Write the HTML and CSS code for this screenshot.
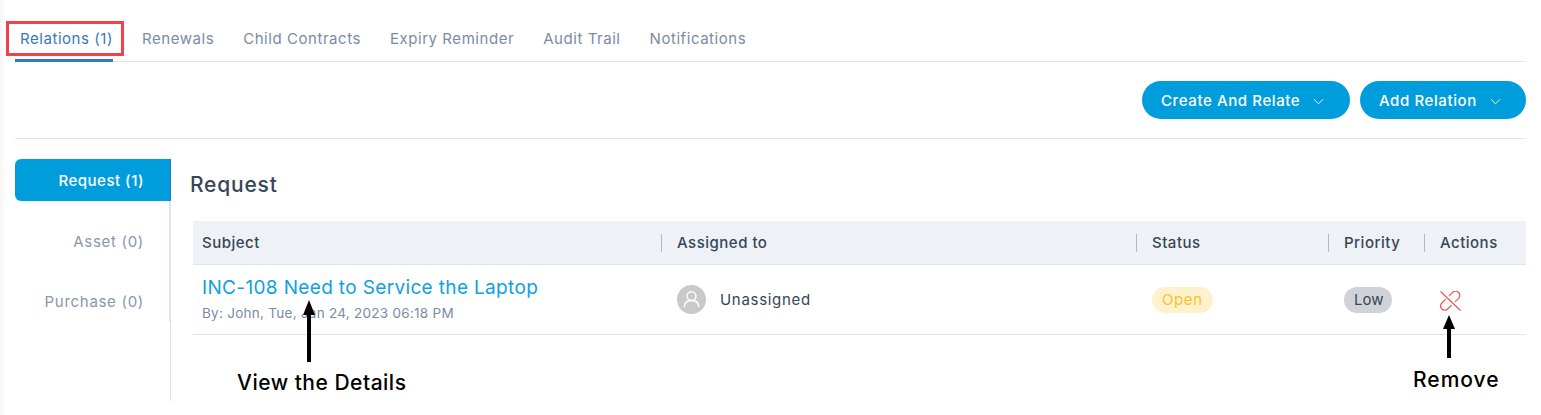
FILE: index.html
```html
<!DOCTYPE html>
<html lang="en">
<head>
<meta charset="UTF-8">
<meta name="viewport" content="width=device-width, initial-scale=1.0">
<title>Relations</title>
<link rel="stylesheet" href="styles.css">
</head>
<body>
    <div class="tabs">
        <a class="tab tab-active">Relations (1)</a>
        <a class="tab">Renewals</a>
        <a class="tab">Child Contracts</a>
        <a class="tab">Expiry Reminder</a>
        <a class="tab">Audit Trail</a>
        <a class="tab">Notifications</a>
    </div>

    <div class="toolbar">
        <button class="button button-create">Create And Relate
            <svg class="chevron" viewBox="0 0 12 7"><path d="M1 1l5 5 5-5"/></svg>
        </button>
        <button class="button button-add">Add Relation
            <svg class="chevron" viewBox="0 0 12 7"><path d="M1 1l5 5 5-5"/></svg>
        </button>
    </div>

    <div class="content">
        <div class="sidebar">
            <div class="side-item side-active">Request (1)</div>
            <div class="side-item">Asset (0)</div>
            <div class="side-item">Purchase (0)</div>
        </div>
        <div class="main">
            <h2 class="heading">Request</h2>
            <div class="table">
                <div class="row row-head">
                    <div class="cell cell-subject">Subject</div>
                    <div class="cell"><span class="sep">Assigned to</span></div>
                    <div class="cell"><span class="sep">Status</span></div>
                    <div class="cell"><span class="sep">Priority</span></div>
                    <div class="cell"><span class="sep">Actions</span></div>
                </div>
                <div class="row row-body">
                    <div class="cell cell-subject">
                        <a class="subject-link">INC-108 Need to Service the Laptop</a>
                        <div class="subject-meta">By: John, Tue, Jan 24, 2023 06:18 PM</div>
                    </div>
                    <div class="cell cell-user">
                        <span class="avatar">
                            <svg viewBox="0 0 30 30"><circle cx="15" cy="11.5" r="4.6"/><path d="M7.5 23c0-4.6 3-7 7.500-7s7.500 2.400 7.500 7"/></svg>
                        </span>
                        Unassigned
                    </div>
                    <div class="cell cell-pad"><span class="pill pill-open">Open</span></div>
                    <div class="cell cell-pad"><span class="pill pill-low">Low</span></div>
                    <div class="cell cell-pad">
                        <svg class="unlink" viewBox="0 0 21 20">
                            <path d="M.5.500l20 19"/>
                            <path d="M5.800 8.100L1.850 12a4.200 4.200 0 0 0 5.900 6l3.850-3.800"/>
                            <path d="M8.900 5.100l3.750-3.700a4.200 4.200 0 0 1 5.900 6L15 10.900"/>
                        </svg>
                    </div>
                </div>
            </div>
        </div>
    </div>

    <!-- annotations drawn over the screenshot -->
    <div class="note note-details">
        <svg class="arrow" viewBox="0 0 12 62"><path d="M6 0l6 15H8v47H4V15H0z"/></svg>
        <span>View the Details</span>
    </div>
    <div class="note note-remove">
        <svg class="arrow" viewBox="0 0 12 43"><path d="M6 0l6 14H8v29H4V14H0z"/></svg>
        <span>Remove</span>
    </div>
</body>
</html>
```

FILE: styles.css
```css
html, body {
    height: 100%;
}
body {
    margin: 0;
    padding: 0 15px;
    height: 415px;
    box-sizing: border-box;
    overflow: hidden;
    position: relative;
    font-family: "Inter", "Open Sans", sans-serif;
    color: #364658;
    background: linear-gradient(to right, #f6f6f6 0, #fdfdfd 5px, #ffffff 6px);
}
.tabs {
    display: flex;
    gap: 29px;
    height: 62px;
    box-sizing: border-box;
    padding-top: 29px;
    border-bottom: 1px solid #dee5ef;
}
.tab {
    height: 32px;
    font-size: 15px;
    letter-spacing: 0.55px;
    line-height: 20px;
    color: #7b8ba5;
}
.tab-active {
    box-sizing: border-box;
    width: 98px;
    height: 33px;
    padding-left: 5px;
    color: #3279be;
    white-space: nowrap;
    border-bottom: 3px solid #3279be;
    position: relative;
}
.tab-active::before {
    content: "";
    position: absolute;
    left: -9px;
    top: -8px;
    width: 112px;
    height: 29px;
    border: 3px solid #f04248;
}
.toolbar {
    display: flex;
    justify-content: flex-end;
    gap: 10px;
    height: 77px;
    box-sizing: border-box;
    padding-top: 19px;
    border-bottom: 1px solid #dee5ef;
}
.button {
    display: flex;
    align-items: center;
    gap: 13px;
    height: 38px;
    padding: 0 19px;
    border: none;
    border-radius: 19px;
    background: #009ddd;
    color: #ffffff;
    font-family: inherit;
    font-size: 15px;
    letter-spacing: 0.6px;
    font-weight: 500;
    white-space: nowrap;
}
.button-create {
    width: 208px;
}
.button-add {
    width: 166px;
}
.chevron {
    width: 11px;
    height: 7px;
    margin-top: 3px;
    flex-shrink: 0;
    fill: none;
    stroke: #ffffff;
    stroke-width: 1;
}
.content {
    display: flex;
    padding-top: 20px;
}
.sidebar {
    width: 156px;
    height: 242px;
    box-sizing: border-box;
    flex-shrink: 0;
    border-right: 1px solid #dee5ef;
}
.side-item {
    height: 61px;
    box-sizing: border-box;
    padding: 31px 25px 0 0;
    margin-bottom: -1px;
    text-align: right;
    font-size: 15px;
    letter-spacing: 0.7px;
    line-height: 20px;
    color: #8797ae;
    border-right: 1px solid #dee5ef;
}
.side-active {
    height: 42px;
    width: 156px;
    padding-top: 12px;
    padding-right: 26px;
    margin-bottom: 0;
    border-radius: 6px 0 0 6px;
    border-right: 1px solid #3279be;
    background: #009ddd;
    color: #ffffff;
    letter-spacing: 0.5px;
    font-weight: 500;
}
.main {
    flex: 1;
    padding-left: 22px;
}
.heading {
    margin: 11px 0 0 -3px;
    height: 51px;
    font-size: 21px;
    letter-spacing: 0.8px;
    font-weight: 500;
    line-height: 30px;
    color: #364658;
}
.row {
    display: grid;
    grid-template-columns: 468px 475px 192px 96px 102px;
}
.row-head {
    height: 44px;
    align-items: center;
    background: #eef1f6;
    border-bottom: 1px solid #dee5ef;
    box-sizing: border-box;
    font-size: 15px;
    letter-spacing: 0.5px;
    font-weight: 500;
}
.sep {
    display: block;
    padding-left: 15px;
    line-height: 18px;
    border-left: 1px solid #a9bbd2;
}
.cell-subject {
    padding-left: 9px;
}
.row-body {
    height: 70px;
    align-items: center;
    box-sizing: border-box;
    border-bottom: 1px solid #dee5ef;
}
.row-body .cell-subject {
    padding-bottom: 2px;
}
.subject-link {
    display: block;
    font-size: 19px;
    letter-spacing: 0.35px;
    line-height: 26px;
    color: #0ea1de;
}
.subject-meta {
    font-size: 13.500px;
    letter-spacing: 0.27px;
    line-height: 18px;
    margin-top: 3px;
    color: #7b8ba5;
}
.cell-user {
    display: flex;
    align-items: center;
    gap: 14px;
    padding-left: 16px;
    font-size: 15px;
    letter-spacing: 0.7px;
}
.avatar {
    width: 29px;
    height: 29px;
    border-radius: 50%;
    background: #c9c9c9;
}
.avatar svg {
    display: block;
    width: 29px;
    height: 29px;
    fill: none;
    stroke: #ffffff;
    stroke-width: 1.500;
}
.cell-pad {
    padding-left: 16px;
}
.pill {
    display: inline-block;
    height: 26px;
    padding: 0 10px;
    border-radius: 13px;
    font-size: 15px;
    line-height: 26px;
}
.pill-open {
    background: #fef2cd;
    color: #fbc02d;
    letter-spacing: 0.6px;
}
.pill-low {
    background: #cfd3d8;
    color: #364658;
    padding-right: 9px;
}
.unlink {
    display: block;
    width: 21px;
    height: 20px;
    margin-top: 2px;
    fill: none;
    stroke: #f05a55;
    stroke-width: 1.300;
}
.note {
    position: absolute;
    color: #000000;
    font-size: 21px;
    font-weight: 500;
    line-height: 28px;
    white-space: nowrap;
}
.note span {
    position: absolute;
}
.arrow {
    position: absolute;
    display: block;
    width: 12px;
    fill: #000000;
}
.note-details {
    left: 237px;
    top: 300px;
    letter-spacing: 0.5px;
}
.note-details .arrow {
    left: 66px;
    top: 0;
    height: 62px;
}
.note-details span {
    left: 0;
    top: 69px;
}
.note-remove {
    left: 1413px;
    top: 315px;
    letter-spacing: 1px;
}
.note-remove .arrow {
    left: 30px;
    top: 0;
    height: 43px;
}
.note-remove span {
    left: 0;
    top: 51px;
}
```
